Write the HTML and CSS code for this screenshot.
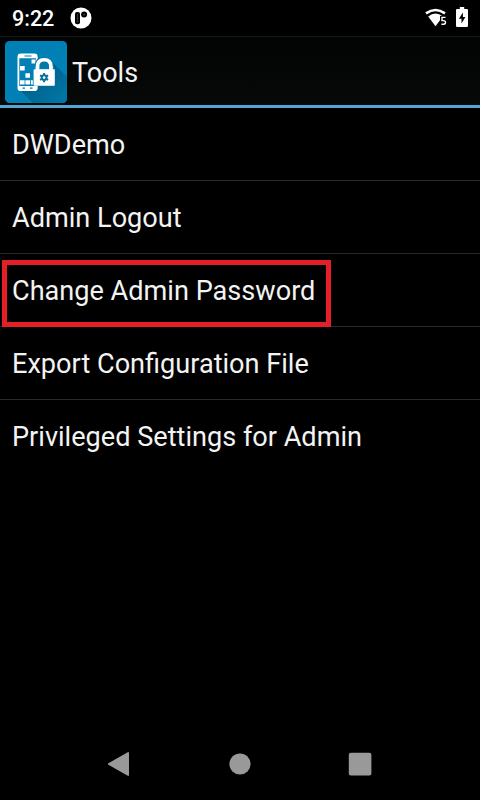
FILE: index.html
```
<!DOCTYPE html>
<html lang="en">
<head>
<meta charset="utf-8">
<title>Tools</title>
<link rel="stylesheet" href="styles.css">
</head>
<body>
<div class="screen">
  <div class="status">
    <span class="clock">9:22</span>
    <svg class="notice" width="22" height="22" viewBox="0 0 22 22">
      <circle cx="11" cy="11" r="10.5" fill="#fff"/>
      <rect x="5" y="5" width="5" height="12.3" rx="2" fill="#000"/>
      <rect x="6.8" y="7" width="1.4" height="8.5" fill="#333"/>
      <circle cx="14.1" cy="7.6" r="3" fill="#000"/>
      <circle cx="14.1" cy="7.6" r=".8" fill="#555"/>
    </svg>
    <svg class="wifi" width="24" height="20" viewBox="0 0 24 20">
      <path d="M1 5.4Q10.5 -1.4 20 5.4" fill="none" stroke="#fff" stroke-width="2.6"/>
      <path d="M3.2 8.4Q10.5 2.4 17.8 8.4L10.5 18.2Z" fill="#fff"/>
      <path d="M15 8H23V19H15Z" fill="#000"/>
      <path d="M20.5 9.4H17V12.6H18.4Q20.5 12.6 20.5 14.4Q20.5 16.2 18.4 16.2H16.4" fill="none" stroke="#fff" stroke-width="1.4"/>
    </svg>
    <svg class="battery" width="12" height="20" viewBox="0 0 12 20">
      <path d="M1.2 2H3.8V0H8.2V2H10.8Q12 2 12 3.2V18.8Q12 20 10.8 20H1.2Q0 20 0 18.8V3.2Q0 2 1.2 2Z" fill="#fff"/>
      <path d="M6.9 5.4L2.9 11.8H5.5V16.6L9.4 10H6.9Z" fill="#000"/>
    </svg>
  </div>
  <header class="bar">
    <svg class="logo" width="62" height="62" viewBox="0 0 62 62">
      <defs>
        <linearGradient id="shade" x1="0" y1="0" x2="1" y2="1">
          <stop offset=".35" stop-color="#00608b"/>
          <stop offset="1" stop-color="#007aaa"/>
        </linearGradient>
        <clipPath id="tile"><rect width="62" height="62" rx="4.5"/></clipPath>
      </defs>
      <g clip-path="url(#tile)">
        <rect width="62" height="62" fill="#0080b4"/>
        <path d="M46 20L62 36V62H28L16 50L30 44Z" fill="url(#shade)"/>
        <rect x="13.4" y="13.5" width="18.4" height="35.7" rx="2.5" fill="#0080b4" stroke="#fff" stroke-width="1.8"/>
        <path d="M13.5 15.2H31.5M13.5 47H31.5" stroke="#fff" stroke-width="4"/>
        <path d="M19.5 15H26.5M17.5 47.2H20M25 47.2H27.5" stroke="#0080b4" stroke-width="1.2"/>
        <path d="M26.5 18.5h4v4h-4zM15 25h4.7v4.5H15zM20.4 32.3h4.6v4.5h-4.6zM15 39.2h4.6v4.2H15zM20.4 39.2h4.6v4.2h-4.6zM25.8 39.2h2.6v4.2h-2.6z" fill="#fff"/>
        <path d="M29.6 29V25.5Q29.6 15.8 39.2 15.8Q48.8 15.8 48.8 25.5V29" fill="#0080b4"/>
        <path d="M32.5 29V25.5Q32.5 18.8 39.2 18.8Q45.9 18.8 45.9 25.5V29" fill="#0078aa" stroke="#fff" stroke-width="3.6"/>
        <rect x="27.8" y="27.4" width="22.2" height="17.6" fill="#0080b4"/>
        <rect x="28.6" y="28.2" width="21.2" height="16.5" rx=".8" fill="#fff"/>
        <path d="M34.3 28.5V26H44.1V28.5Z" fill="#0078aa"/>
        <path d="M32.5 29V25.5M45.9 29V25.5" stroke="#fff" stroke-width="3.6"/>
        <path d="M33 28.2H46V30H33Z" fill="#fff"/>
        <circle cx="39.1" cy="36.6" r="2.4" fill="none" stroke="#086c98" stroke-width="2"/>
        <path d="M39.1 32V33.8M39.1 39.4V41.2M35.1 34.3L36.7 35.2M41.5 38L43.1 38.9M35.1 38.9L36.7 38M41.5 35.2L43.1 34.3" stroke="#086c98" stroke-width="2"/>
      </g>
    </svg>
    <h1 class="title">Tools</h1>
  </header>
  <ul class="list">
    <li class="row"><span>DWDemo</span></li>
    <li class="row"><span>Admin Logout</span></li>
    <li class="row marked"><span>Change Admin Password</span></li>
    <li class="row"><span>Export Configuration File</span></li>
    <li class="row"><span>Privileged Settings for Admin</span></li>
  </ul>
  <nav class="nav">
    <svg width="24" height="26" viewBox="0 0 24 26"><path d="M.4 12.2L19.3 1.4Q21 .5 21 2V24Q21 25.5 19.3 24.6L.4 13.8Q-.8 13 .4 12.2Z" fill="#999"/></svg>
    <svg width="24" height="26" viewBox="0 0 24 26"><circle cx="12" cy="13" r="10.6" fill="#999"/></svg>
    <svg width="24" height="26" viewBox="0 0 24 26"><rect x=".8" y="1.8" width="22.6" height="22.6" rx="2" fill="#999"/></svg>
  </nav>
</div>
</body>
</html>
```
FILE: styles.css
```
body {
  margin: 0;
  background: #000;
  color: #f3f3f3;
  font-family: Roboto, sans-serif;
}
.screen {
  display: flex;
  flex-direction: column;
  width: 480px;
  height: 800px;
  overflow: hidden;
}
.status {
  display: flex;
  align-items: center;
  box-sizing: border-box;
  height: 36px;
  padding: 0 12px;
}
.clock {
  width: 58px;
  padding-top: 2px;
  font-size: 21.5px;
  font-weight: 500;
  line-height: 34px;
  color: #fff;
}
.wifi {
  margin-left: auto;
  margin-right: 7px;
}
.battery {
  margin-bottom: 2px;
}
.bar {
  display: flex;
  box-sizing: border-box;
  height: 72px;
  padding: 4px 5px 0;
  border-top: 1px solid #171717;
  border-bottom: 3px solid #52a6d1;
  background: linear-gradient(#020303, #070909);
}
.title {
  margin: 0 0 0 5px;
  font-size: 27px;
  font-weight: 400;
  line-height: 65px;
}
.list {
  flex: 1;
  margin: 0;
  padding: 0;
  list-style: none;
}
.row {
  position: relative;
  box-sizing: border-box;
  height: 73px;
  padding-left: 12px;
  border-bottom: 1px solid #292929;
  font-size: 27.12px;
  line-height: 75px;
  white-space: nowrap;
}
.row:last-child {
  border-bottom: 0;
}
.marked::after {
  content: "";
  position: absolute;
  left: 2px;
  top: 6px;
  box-sizing: border-box;
  width: 329px;
  height: 67px;
  border: 5px solid #e51f27;
}
.nav {
  display: flex;
  justify-content: center;
  align-items: center;
  gap: 96px;
  height: 72px;
}
```
